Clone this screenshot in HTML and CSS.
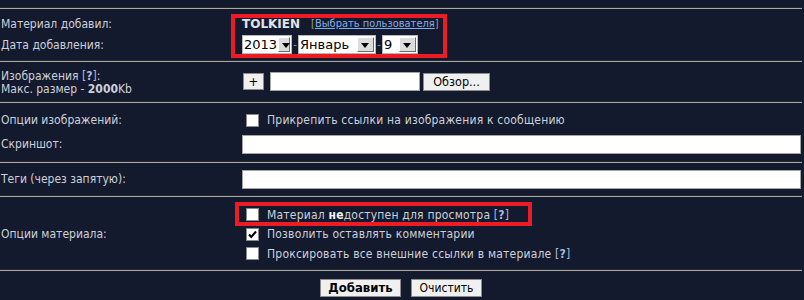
FILE: index.html
```html
<!DOCTYPE html>
<html>
<head>
  <title>Добавить материал</title>
  <link rel="stylesheet" href="styles.css">
</head>
<body>
  <div class="form">
    <hr class="sep">

    <div class="row row-author">
      <div class="lbl">Материал добавил:</div>
      <div class="field"><b class="author">TOLKIEN</b><span class="pick">[<a href="#">Выбрать пользователя</a>]</span></div>
      <div class="lbl">Дата добавления:</div>
      <div class="field">
        <span class="sel sel-year"><span class="val">2013</span><span class="arrow"></span></span>
        <span class="dash">-</span>
        <span class="sel sel-month"><span class="val">Январь</span><span class="arrow"></span></span>
        <span class="dash">-</span>
        <span class="sel sel-day"><span class="val">9</span><span class="arrow"></span></span>
      </div>
    </div>

    <hr class="sep">

    <div class="row row-images">
      <div class="lbl lbl-two">
        Изображения <span class="help">[<b>?</b>]</span>:<br>
        Макс. размер - <b>2000</b>Kb
      </div>
      <div class="field">
        <button class="btn btn-plus">+</button>
        <input type="text" class="txt txt-file">
        <button class="btn btn-browse">Обзор...</button>
      </div>
    </div>

    <hr class="sep">

    <div class="row row-opts">
      <div class="lbl">Опции изображений:</div>
      <div class="field"><span class="cb"></span><span class="cap">Прикрепить ссылки на изображения к сообщению</span></div>
      <div class="lbl">Скриншот:</div>
      <div class="field"><input type="text" class="txt txt-wide"></div>
    </div>

    <hr class="sep">

    <div class="row row-tags">
      <div class="lbl">Теги (через запятую):</div>
      <div class="field"><input type="text" class="txt txt-wide"></div>
    </div>

    <hr class="sep">

    <div class="row row-material">
      <div class="lbl lbl-span">Опции материала:</div>
      <div class="field"><span class="cb"></span><span class="cap">Материал <b class="hl">не</b>доступен для просмотра <span class="help">[<b>?</b>]</span></span></div>
      <div class="field"><span class="cb cb-on"><svg width="11" height="11" viewBox="0 0 11 11"><path d="M2 5.5 L4.3 8 L9 2.5" fill="none" stroke="#000" stroke-width="2"/></svg></span><span class="cap">Позволить оставлять комментарии</span></div>
      <div class="field"><span class="cb"></span><span class="cap">Проксировать все внешние ссылки в материале <span class="help">[<b>?</b>]</span></span></div>
    </div>

    <hr class="sep">

    <div class="actions">
      <button class="btn btn-submit">Добавить</button>
      <button class="btn btn-reset">Очистить</button>
    </div>

    <div class="mark mark-author"></div>
    <div class="mark mark-hidden"></div>
  </div>
</body>
</html>
```

FILE: styles.css
```css
body {
  margin: 0;
  padding: 0;
  background: #141a2e;
  font-family: "DejaVu Sans Condensed", "DejaVu Sans", Verdana, sans-serif;
  font-size: 12px;
  color: #cdd1d9;
}

.form {
  position: relative;
  width: 802px;
  padding-top: 7px;
}

.sep {
  height: 0;
  margin: 0;
  border: 0;
  border-top: 1px solid #272727;
  border-bottom: 1px solid #a9a9a9;
}

.row {
  display: grid;
  grid-template-columns: 242px 1fr;
  align-items: center;
}

.lbl {
  padding-left: 1px;
  white-space: nowrap;
}

.field {
  display: flex;
  align-items: center;
  white-space: nowrap;
}

.cap {
  letter-spacing: 0.2px;
}

/* author + date */
.row-author {
  grid-auto-rows: 21px;
  padding: 4px 0 5px;
}

.author {
  color: #e2e4ea;
  font-family: "DejaVu Sans", Verdana, sans-serif;
  font-size: 12px;
}

.pick {
  margin-left: 11px;
  font-size: 11px;
  color: #9a9ea8;
}

.pick a {
  color: #86aee6;
}

.sel {
  display: inline-flex;
  height: 19px;
  box-sizing: border-box;
  background: #fff;
  border: 1px solid #b8b8b8;
  color: #000;
  font-family: "DejaVu Sans", Verdana, sans-serif;
  font-size: 13px;
}

.sel .val {
  flex: 1;
  padding-left: 1px;
  line-height: 17px;
}

.sel .arrow {
  position: relative;
  width: 17px;
  margin: 1px;
  box-sizing: border-box;
  background: #dcdcdc;
  border: 1px solid;
  border-color: #fff #6b6b6b #6b6b6b #fff;
}

.sel .arrow::after {
  content: "";
  position: absolute;
  left: 3px;
  top: 5px;
  border-left: 4.5px solid transparent;
  border-right: 4.5px solid transparent;
  border-top: 5px solid #000;
}

.sel-year { width: 50px; }
.sel-month { width: 78px; }
.sel-day { width: 36px; }

.dash {
  width: 6px;
  text-align: center;
  color: #9a9ea8;
  font-size: 11px;
}

/* images */
.row-images {
  height: 39px;
}

.lbl-two {
  line-height: 13px;
  padding-top: 3px;
}

.help {
  color: #a8bbdc;
}

.btn {
  margin: 0;
  padding: 0;
  box-sizing: border-box;
  background: #f0f0f0;
  border: 1px solid #8c8c8c;
  color: #000;
  font-family: "DejaVu Sans Condensed", "DejaVu Sans", Verdana, sans-serif;
  font-size: 12px;
  cursor: pointer;
}

.btn-plus {
  width: 21px;
  height: 17px;
  margin-left: 1px;
  font-size: 13px;
  line-height: 14px;
}

.btn-browse {
  width: 67px;
  height: 18px;
  margin-left: 3px;
  font-size: 12.5px;
}

.txt {
  margin: 0;
  padding: 0 2px;
  height: 19px;
  box-sizing: border-box;
  background: #fff;
  border: 1px solid #a4a4a4;
}

.txt-file {
  width: 150px;
  margin-left: 6px;
}

.txt-wide {
  flex: 1;
  margin-right: 1px;
}

/* checkboxes */
.cb {
  display: inline-flex;
  align-items: center;
  justify-content: center;
  width: 13px;
  height: 13px;
  box-sizing: border-box;
  margin: 0 8px 0 4px;
  background: #fff;
  border: 1px solid #8a8a8a;
}

.row-opts {
  grid-auto-rows: 24px;
  padding: 5px 0;
}

.row-tags {
  height: 32px;
}

.row-material {
  grid-auto-rows: 19.5px;
  padding: 8px 0 5px;
}

.row-material .field {
  grid-column: 2;
}

.lbl-span {
  grid-row: 1 / 4;
}

.hl {
  color: #f2f3f6;
}

/* buttons */
.actions {
  display: flex;
  justify-content: center;
  gap: 10px;
  padding-top: 8px;
}

.btn-submit {
  width: 81px;
  height: 18px;
  font-weight: bold;
  font-size: 13px;
}

.btn-reset {
  width: 71px;
  height: 18px;
}

/* red annotation frames */
.mark {
  position: absolute;
  box-sizing: border-box;
  border: 4px solid #ec1c24;
}

.mark-author {
  left: 231px;
  top: 14px;
  width: 216px;
  height: 44px;
}

.mark-hidden {
  left: 235px;
  top: 202px;
  width: 297px;
  height: 24px;
}
```
